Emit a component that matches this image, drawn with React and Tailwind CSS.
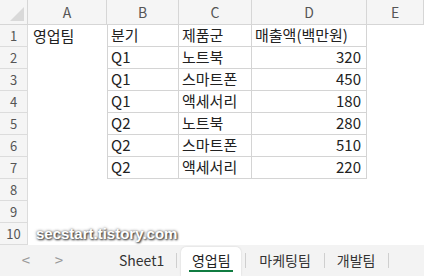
import React from 'react';

const font = { fontFamily: '"Malgun Gothic", "Noto Sans CJK KR", "Noto Sans", sans-serif' };

// 표 데이터 (B1:D7)
const rows = [
    ['분기', '제품군', '매출액(백만원)'],
    ['Q1', '노트북', '320'],
    ['Q1', '스마트폰', '450'],
    ['Q1', '액세서리', '180'],
    ['Q2', '노트북', '280'],
    ['Q2', '스마트폰', '510'],
    ['Q2', '액세서리', '220'],
];

const cols = ['A', 'B', 'C', 'D', 'E'];

function App() {
    return (
        <div className="relative w-[424px] h-[276px] overflow-hidden bg-white flex flex-col text-[#222]" style={font}>
            <div className="grid grid-cols-[28px_79px_72px_73px_115px_1fr] grid-rows-[25px_repeat(10,22px)] h-[245px]">
                {/* corner */}
                <div className="bg-[#f5f5f5] border-r border-b border-[#d6d6d6] relative">
                    <div className="absolute right-[3px] bottom-[3px] w-0 h-0 border-l-[14px] border-l-transparent border-b-[14px] border-b-[#d9d9d9]" />
                </div>
                {cols.map((c) => (
                    <div key={c} className="bg-[#f5f5f5] border-r border-b border-[#d6d6d6] flex items-center justify-center text-[14px] text-[#555]">
                        {c}
                    </div>
                ))}

                {Array.from({ length: 10 }).map((_, r) => (
                    <React.Fragment key={r}>
                        <div className="bg-[#f5f5f5] border-r border-b border-[#dcdcdc] flex items-center justify-center text-[13px] text-[#555]">
                            {r + 1}
                        </div>
                        <div className="flex items-center pl-[5px] text-[15px]">
                            {r === 0 ? '영업팀' : ''}
                        </div>
                        {rows[r] ? (
                            rows[r].map((v, i) => (
                                <div
                                    key={i}
                                    className={`flex items-center px-[3px] text-[15px] border-r border-b border-[#d4d4d4] ${i === 0 ? 'border-l' : ''} ${i === 2 && r > 0 ? 'justify-end pr-[5px]' : ''}`}
                                >
                                    {v}
                                </div>
                            ))
                        ) : (
                            <>
                                <div />
                                <div />
                                <div />
                            </>
                        )}
                        <div />
                    </React.Fragment>
                ))}
            </div>

            {/* 워터마크 */}
            <span
                className="absolute left-[36px] top-[223px] text-white font-bold text-[15px] [text-shadow:1px_1px_2px_#333,0_0_3px_#555]"
                style={{ fontFamily: 'Arial, "Liberation Sans", sans-serif' }}
            >
                secstart.tistory.com
            </span>

            {/* 시트 탭 */}
            <div className="flex-1 bg-[#f3f3f3] flex items-center text-[14px] text-[#333]">
                <span className="w-[52px] text-center text-[#9a9a9a] text-[15px]">&lt;</span>
                <span className="w-[14px] text-center text-[#9a9a9a] text-[15px]">&gt;</span>
                <span className="ml-[53px]">Sheet1</span>
                <span className="ml-[12px] w-px h-[15px] bg-[#cfcfcf]" />
                <div className="ml-[4px] self-end h-[29px] w-[60px] bg-white rounded-t-[5px] shadow-[0_0_2px_rgba(0,0,0,0.15)] flex flex-col items-center justify-center">
                    <span className="leading-[18px] text-[#222]">영업팀</span>
                    <span className="mt-[1px] w-[44px] h-[2px] bg-[#107c41]" />
                </div>
                <span className="ml-[4px] w-px h-[15px] bg-[#cfcfcf]" />
                <span className="ml-[13px]">마케팅팀</span>
                <span className="ml-[13px] w-px h-[15px] bg-[#cfcfcf]" />
                <span className="ml-[12px]">개발팀</span>
                <span className="ml-[13px] w-px h-[15px] bg-[#cfcfcf]" />
            </div>
        </div>
    );
}

export default App;
